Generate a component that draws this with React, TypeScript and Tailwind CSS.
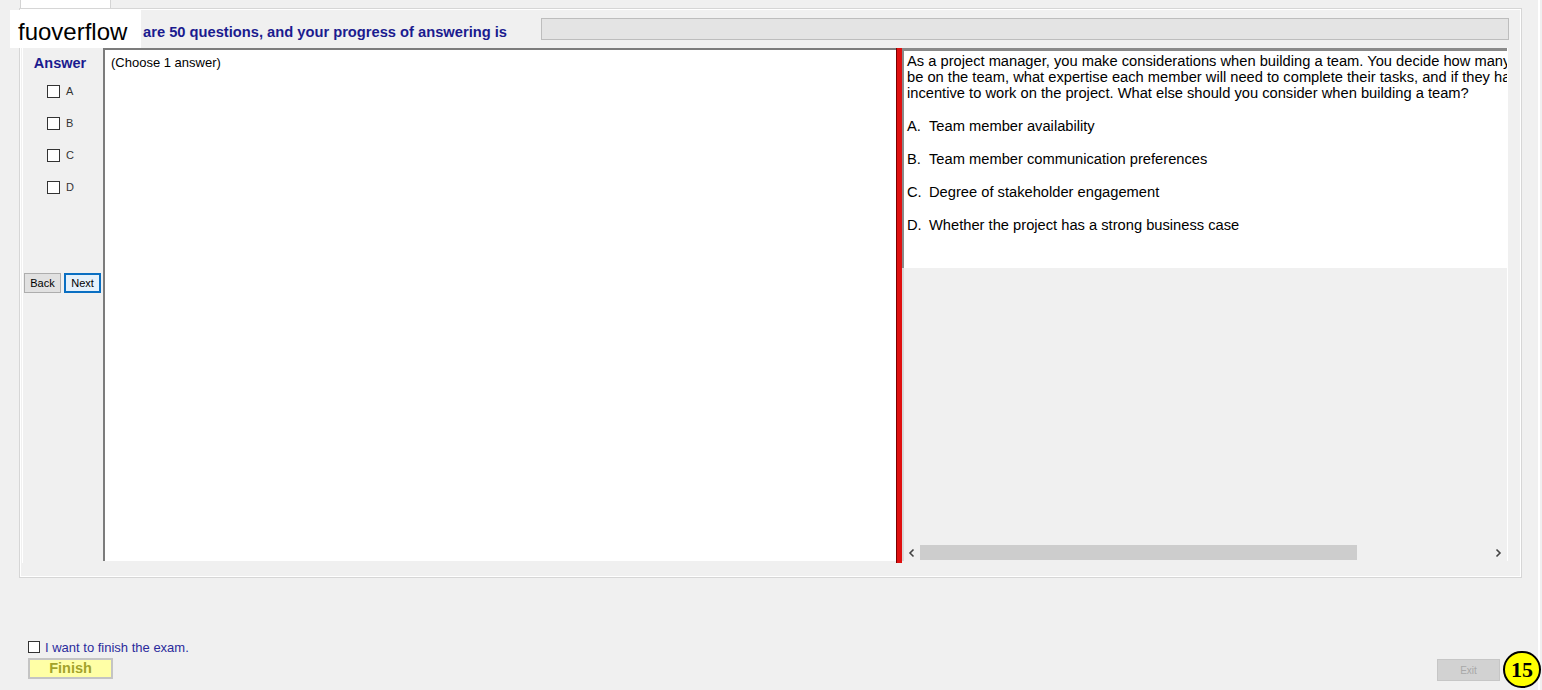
import React from 'react';

const options = [
  { key: 'A', text: 'Team member availability' },
  { key: 'B', text: 'Team member communication preferences' },
  { key: 'C', text: 'Degree of stakeholder engagement' },
  { key: 'D', text: 'Whether the project has a strong business case' },
];

const Box = () => <span className="inline-block h-[13px] w-[13px] border border-[#333] bg-white" />;

const Chevron = ({ dir }: { dir: 'left' | 'right' }) => (
  <svg width="8" height="10" viewBox="0 0 8 10" className="shrink-0">
    <path
      d={dir === 'left' ? 'M5.5 1.5 L2 5 L5.5 8.5' : 'M2.5 1.5 L6 5 L2.5 8.5'}
      fill="none"
      stroke="#444"
      strokeWidth="1.6"
    />
  </svg>
);

export default function App() {
  return (
    <div className="relative h-[690px] w-[1542px] overflow-hidden bg-[#f0f0f0] font-['Liberation_Sans',Arial,sans-serif]">
      <div className="h-full w-[1540px] border-r-2 border-white">
        {/* tab stub */}
        <div className="h-[8px] pl-[20px]">
          <div className="h-full w-[91px] border-x border-[#d4d4d4] bg-white" />
        </div>

        {/* exam panel */}
        <div className="ml-[19px] h-[570px] w-[1503px] border border-[#d6d6d6] shadow-[inset_1px_1px_0_#fff,inset_-1px_-1px_0_#fff]">
          <div className="flex h-[39px] items-end pb-[8px] pr-[12px]">
            <span className="pl-[123px] text-[14.7px] font-bold leading-[16px] text-[#1b1b8f]">
              are 50 questions, and your progress of answering is
            </span>
            <div className="ml-auto h-[22px] w-[968px] border border-[#bdbdbd] bg-[#e4e4e4]" />
          </div>

          <div className="flex h-[515px] pl-[2px]">
            {/* answer column */}
            <div className="flex w-[81px] flex-col border-l border-white">
              <div className="pr-[6px] pt-[7px] text-center text-[14.5px] font-bold leading-[16px] text-[#1b1b8f]">Answer</div>
              <div className="mt-[4px] flex flex-col">
                {options.map((o) => (
                  <label key={o.key} className="flex h-[32px] items-center gap-[6px] pl-[24px] text-[11px] text-[#333]">
                    <Box />
                    {o.key}
                  </label>
                ))}
              </div>
              <div className="mt-[70px] flex gap-[3px] pl-[1px] text-[11px] leading-none text-black">
                <button className="h-[20px] w-[37px] border border-[#adadad] bg-[#e1e1e1]">Back</button>
                <button className="h-[20px] w-[37px] border-2 border-[#0a6fc2] bg-[#e5f1fb]">Next</button>
              </div>
            </div>

            {/* answer notes */}
            <div className="h-[513px] w-[793px] border-l-2 border-t-2 border-[#7c7c7c] bg-white pl-[6px] pt-[5px] text-[13px] leading-[15px] text-black">
              (Choose 1 answer)
            </div>

            {/* splitter */}
            <div className="h-full w-[6px] border-l border-[#7a0000] bg-[#e01010]" />

            {/* question pane */}
            <div className="flex h-[513px] w-[606px] flex-col border-r border-white">
              <div className="h-[220px] overflow-hidden border-l-2 border-t-[3px] border-[#8a8a8a] bg-white pl-[3px] pt-[2px] text-[14.7px] leading-[16px] text-black">
                <div className="w-[820px] whitespace-nowrap">
                  <div>As a project manager, you make considerations when building a team. You decide how many people will</div>
                  <div>be on the team, what expertise each member will need to complete their tasks, and if they have an</div>
                  <div>incentive to work on the project. What else should you consider when building a team?</div>
                  {options.map((o) => (
                    <div key={o.key} className="mt-[17px] flex">
                      <span className="w-[22px]">{o.key}.</span>
                      <span>{o.text}</span>
                    </div>
                  ))}
                </div>
              </div>
              <div className="flex-1 border-l-2 border-[#d8d8d8]" />
              <div className="flex h-[17px] items-center border-l-2 border-[#d8d8d8] bg-[#f0f0f0] pl-[4px] pr-[5px]">
                <Chevron dir="left" />
                <div className="ml-[4px] h-[15px] w-[437px] bg-[#cdcdcd]" />
                <div className="flex-1" />
                <Chevron dir="right" />
              </div>
            </div>
          </div>
        </div>

        {/* finish controls */}
        <div className="flex h-[112px] items-end justify-between">
          <div className="mb-[10px] pl-[28px]">
            <label className="flex items-center gap-[5px] text-[13px] leading-[15px] text-[#2b2b9c]">
              <span className="inline-block h-[12px] w-[12px] border border-[#333] bg-white" />
              I want to finish the exam.
            </label>
            <button className="mt-[3px] h-[21px] w-[85px] border-2 border-[#c4c4c4] bg-[#ffffa6] text-[14.5px] font-bold leading-none text-[#a3a32a]">
              Finish
            </button>
          </div>
          <button className="mb-[9px] mr-[38px] h-[22px] w-[63px] border border-[#c6c6c6] bg-[#d2d2d2] text-[10px] text-[#a8a8a8]">
            Exit
          </button>
        </div>
      </div>

      {/* watermark */}
      <div className="absolute left-[10px] top-[10px] flex h-[38px] w-[131px] items-center bg-white pl-[8px] pt-[5px] text-[24px] leading-none text-black">
        fuoverflow
      </div>

      {/* page badge */}
      <div className="absolute bottom-[2px] right-[1px] flex h-[37px] w-[38px] items-center justify-center rounded-full border-2 border-black bg-[#ffff00] font-['Liberation_Serif',serif] text-[22px] font-bold leading-none text-black">
        15
      </div>
    </div>
  );
}
